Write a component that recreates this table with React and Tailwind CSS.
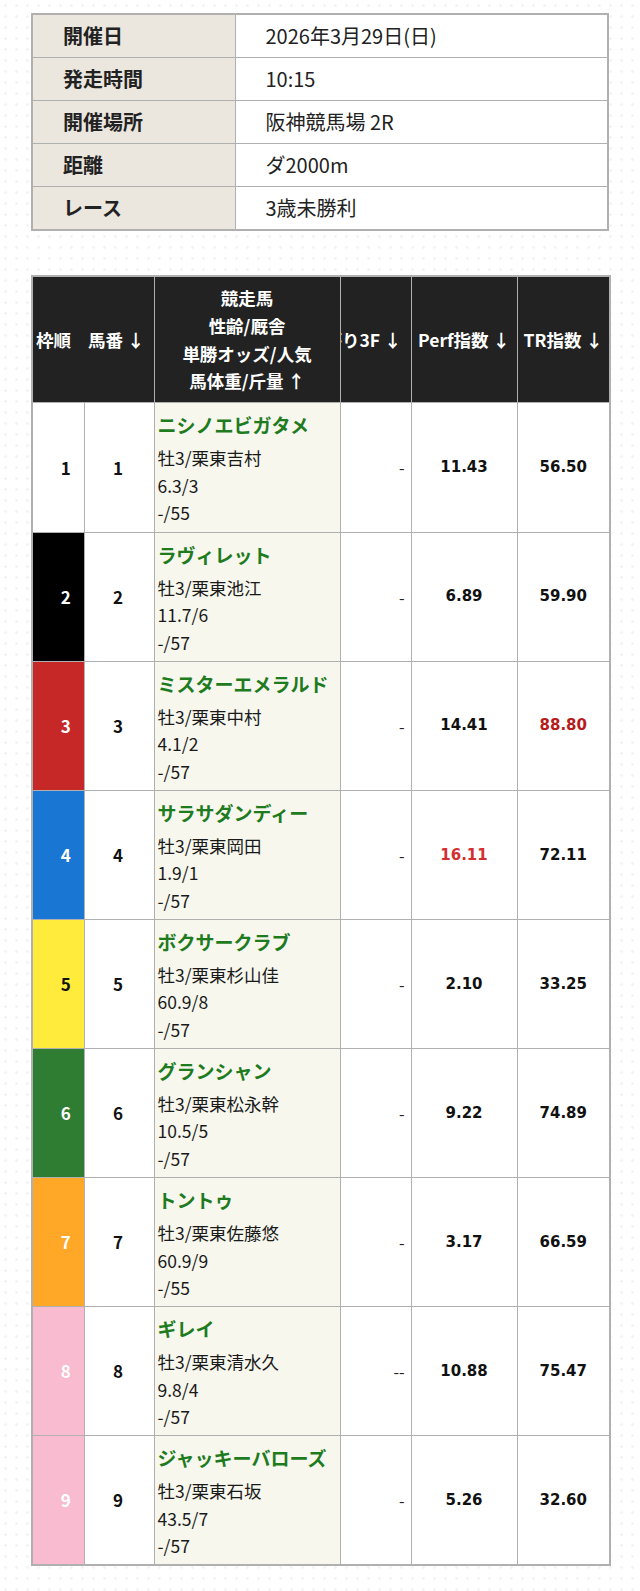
const info = [
  ['開催日', '2026年3月29日(日)'],
  ['発走時間', '10:15'],
  ['開催場所', '阪神競馬場 2R'],
  ['距離', 'ダ2000m'],
  ['レース', '3歳未勝利'],
];

const horses = [
  { no: 1, frame: 'bg-white text-[#111]', name: 'ニシノエビガタメ', profile: '牡3/栗東吉村', odds: '6.3/3', weight: '-/55', f3: '-', perf: '11.43', tr: '56.50' },
  { no: 2, frame: 'bg-black text-white', name: 'ラヴィレット', profile: '牡3/栗東池江', odds: '11.7/6', weight: '-/57', f3: '-', perf: '6.89', tr: '59.90' },
  { no: 3, frame: 'bg-[#c62828] text-white', name: 'ミスターエメラルド', profile: '牡3/栗東中村', odds: '4.1/2', weight: '-/57', f3: '-', perf: '14.41', tr: '88.80', trHot: true },
  { no: 4, frame: 'bg-[#1976d2] text-white', name: 'サラサダンディー', profile: '牡3/栗東岡田', odds: '1.9/1', weight: '-/57', f3: '-', perf: '16.11', tr: '72.11', perfHot: true },
  { no: 5, frame: 'bg-[#ffeb3b] text-[#111]', name: 'ボクサークラブ', profile: '牡3/栗東杉山佳', odds: '60.9/8', weight: '-/57', f3: '-', perf: '2.10', tr: '33.25' },
  { no: 6, frame: 'bg-[#2e7d32] text-white', name: 'グランシャン', profile: '牡3/栗東松永幹', odds: '10.5/5', weight: '-/57', f3: '-', perf: '9.22', tr: '74.89' },
  { no: 7, frame: 'bg-[#ffa726] text-white', name: 'トントゥ', profile: '牡3/栗東佐藤悠', odds: '60.9/9', weight: '-/55', f3: '-', perf: '3.17', tr: '66.59' },
  { no: 8, frame: 'bg-[#f8bbd0] text-white', name: 'ギレイ', profile: '牡3/栗東清水久', odds: '9.8/4', weight: '-/57', f3: '--', perf: '10.88', tr: '75.47' },
  { no: 9, frame: 'bg-[#f8bbd0] text-white', name: 'ジャッキーバローズ', profile: '牡3/栗東石坂', odds: '43.5/7', weight: '-/57', f3: '-', perf: '5.26', tr: '32.60' },
];

const cell = 'border border-[#b0b0b0]';
const num = "font-['DejaVu_Sans',sans-serif] text-[15px] font-bold text-center";

export default function App() {
  return (
    <div className="min-h-[1591px] bg-white bg-[image:radial-gradient(circle,#f3f3f3_1px,transparent_1.6px)] bg-[length:11px_11px] px-[31px] pt-[13px] pb-[25px] font-['Noto_Sans_CJK_JP','Noto_Sans',sans-serif] text-[#222]">
      {/* Race info */}
      <table className="w-[578px] table-fixed border-collapse border-2 border-[#b0b0b0] bg-white">
        <colgroup>
          <col className="w-[203px]" />
          <col />
        </colgroup>
        <tbody>
          {info.map(([label, value]) => (
            <tr key={label} className="h-[43.2px]">
              <th className={`${cell} bg-[#ebe7df] pl-[30px] text-left text-[20px] font-bold leading-[30px] text-[#222]`}>{label}</th>
              <td className={`${cell} pl-[30px] text-[20px] leading-[30px]`}>{value}</td>
            </tr>
          ))}
        </tbody>
      </table>

      {/* Entry table */}
      <table className="mt-[44px] w-[578px] table-fixed border-collapse border-2 border-[#b0b0b0] bg-white">
        <colgroup>
          <col className="w-[52px]" />
          <col className="w-[70px]" />
          <col className="w-[186px]" />
          <col className="w-[71px]" />
          <col className="w-[106px]" />
          <col className="w-[93px]" />
        </colgroup>
        <thead>
          <tr className="h-[127px] bg-[#222] text-[17.5px] font-bold text-white">
            <th colSpan={2} className="border border-[#b0b0b0] p-0">
              <div className="flex items-center whitespace-nowrap">
                <span className="w-[52px] pl-[3px] text-left">枠順</span>
                <span className="flex-1 pr-[6px] text-center">馬番 ↓</span>
              </div>
            </th>
            <th className="border border-[#b0b0b0] text-center leading-[27.7px]">
              競走馬<br />性齢/厩舎<br />単勝オッズ/人気<br />馬体重/斤量 ↑
            </th>
            <th className="border border-[#b0b0b0] p-0">
              <div className="flex justify-end overflow-hidden whitespace-nowrap pr-[9px]">上がり3F ↓</div>
            </th>
            <th className="border border-[#b0b0b0] whitespace-nowrap text-center">Perf指数 ↓</th>
            <th className="border border-[#b0b0b0] whitespace-nowrap text-center">TR指数 ↓</th>
          </tr>
        </thead>
        <tbody>
          {horses.map((h) => (
            <tr key={h.no}>
              <td className={`${cell} ${h.frame} pl-[15px] text-center text-[17px] font-bold`}>{h.no}</td>
              <td className={`${cell} pr-[2px] text-center text-[17px] font-bold text-[#111]`}>{h.no}</td>
              <td className={`${cell} bg-[#f7f7ee] pl-[3px] pt-[4px] pb-[4.6px] align-top`}>
                <div className="mb-[2px] whitespace-nowrap text-[19px] font-bold leading-[35px] text-[#1e7b1e]">{h.name}</div>
                <div className="text-[17.5px] leading-[27.5px] text-[#1a1a1a]">
                  <div>{h.profile}</div>
                  <div>{h.odds}</div>
                  <div>{h.weight}</div>
                </div>
              </td>
              <td className={`${cell} pr-[6px] text-right text-[16px]`}>{h.f3}</td>
              <td className={`${cell} ${num} ${h.perfHot ? 'text-[#d32f2f]' : 'text-[#111]'}`}>{h.perf}</td>
              <td className={`${cell} ${num} ${h.trHot ? 'text-[#b71c1c]' : 'text-[#111]'}`}>{h.tr}</td>
            </tr>
          ))}
        </tbody>
      </table>
    </div>
  );
}
